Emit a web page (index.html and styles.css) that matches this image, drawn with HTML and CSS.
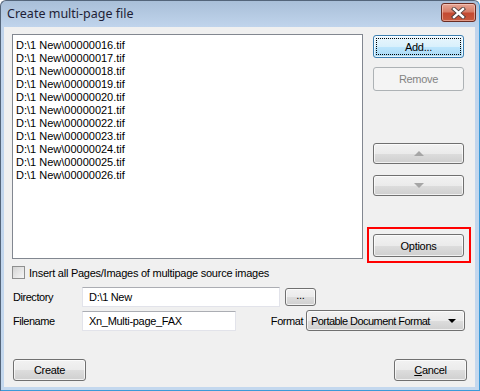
FILE: index.html
```html
<!DOCTYPE html>
<html lang="en">
<head>
    <meta charset="UTF-8">
    <title>Create multi-page file</title>
    <link rel="stylesheet" href="styles.css">
</head>
<body>
    <div class="window">
        <!-- Title bar -->
        <div class="titlebar">
            <span class="title">Create multi-page file</span>
            <button class="close-btn" aria-label="Close">
                <svg width="15" height="12" viewBox="0 0 15 12">
                    <path d="M3 2 L12 10 M12 2 L3 10" stroke="#4a3a38" stroke-width="4.2" stroke-linecap="square"/>
                    <path d="M3 2 L12 10 M12 2 L3 10" stroke="#ffffff" stroke-width="2.4" stroke-linecap="square"/>
                </svg>
            </button>
        </div>

        <!-- Client area -->
        <div class="client">
            <div class="top">
                <ul class="file-list">
                    <li>D:\1 New\00000016.tif</li>
                    <li>D:\1 New\00000017.tif</li>
                    <li>D:\1 New\00000018.tif</li>
                    <li>D:\1 New\00000019.tif</li>
                    <li>D:\1 New\00000020.tif</li>
                    <li>D:\1 New\00000021.tif</li>
                    <li>D:\1 New\00000022.tif</li>
                    <li>D:\1 New\00000023.tif</li>
                    <li>D:\1 New\00000024.tif</li>
                    <li>D:\1 New\00000025.tif</li>
                    <li>D:\1 New\00000026.tif</li>
                </ul>
                <div class="side">
                    <button class="btn btn-default btn-add">Add...</button>
                    <button class="btn btn-disabled btn-remove">Remove</button>
                    <button class="btn btn-arrow btn-up"><span class="tri-up"></span></button>
                    <button class="btn btn-arrow btn-down"><span class="tri-down"></span></button>
                    <div class="highlight">
                        <button class="btn btn-options">Options</button>
                    </div>
                </div>
            </div>

            <label class="check-row">
                <span class="checkbox"></span>
                <span class="check-text">Insert all Pages/Images of multipage source images</span>
            </label>

            <div class="row row-dir">
                <span class="label">Directory</span>
                <div class="textbox textbox-dir">D:\1 New</div>
                <button class="btn btn-browse">...</button>
            </div>

            <div class="row row-file">
                <span class="label">Filename</span>
                <div class="textbox textbox-file">Xn_Multi-page_FAX</div>
                <span class="format-label">Format</span>
                <div class="combo">
                    <span>Portable Document Format</span>
                    <span class="tri-combo"></span>
                </div>
            </div>

            <div class="bottom">
                <button class="btn btn-create">Create</button>
                <button class="btn btn-cancel"><u>C</u>ancel</button>
            </div>
        </div>
    </div>
</body>
</html>
```

FILE: styles.css
```css
/* Reset */
* {
    margin: 0;
    padding: 0;
    box-sizing: border-box;
}

body {
    font-family: "Liberation Sans", Arial, sans-serif;
    font-size: 11px;
    color: #000;
    background: #ffffff;
    width: 480px;
    height: 391px;
    overflow: hidden;
}

/* Window frame */
.window {
    width: 480px;
    height: 391px;
    display: flex;
    flex-direction: column;
    padding: 0 4px 3px 3px;
    background: linear-gradient(to bottom, #a9bfd8 0, #c0d4ec 26px, #c4d8ee 100%);
    border: 1px solid #54657a;
    border-right-color: #3b9ad8;
    border-bottom-color: #3b9ad8;
    border-radius: 6px 6px 0 0;
}

.titlebar {
    height: 26px;
    display: flex;
    align-items: center;
    justify-content: space-between;
    padding: 0 0 0 3px;
}

.title {
    font-family: "Noto Sans", sans-serif;
    font-size: 12.5px;
    color: #1e1e36;
    margin-top: -2px;
}

.close-btn {
    width: 35px;
    height: 19px;
    margin-top: -3px;
    margin-right: -1px;
    border: 1px solid #6b2c22;
    border-radius: 3px;
    background: linear-gradient(to bottom, #e6a696 0%, #d77e68 45%, #c44a32 55%, #c75a3e 100%);
    display: flex;
    align-items: center;
    justify-content: center;
    box-shadow: inset 0 0 0 1px rgba(255, 220, 210, 0.5);
}

.close-btn svg {
    display: block;
}

/* Client area */
.client {
    flex: 1;
    background: #f0f0f0;
    display: flex;
    flex-direction: column;
    padding: 0 8px 6px 8px;
}

.top {
    display: flex;
    margin-top: 7px;
    height: 225px;
}

.file-list {
    list-style: none;
    width: 351px;
    height: 225px;
    background: #fff;
    border: 1px solid #828790;
    padding: 4px 3px;
    line-height: 13px;
}

.side {
    width: 91px;
    margin-left: 10px;
    padding-top: 1px;
    display: flex;
    flex-direction: column;
}

/* Buttons */
.btn {
    position: relative;
    font-family: "Liberation Sans", Arial, sans-serif;
    font-size: 11px;
    letter-spacing: -0.3px;
    color: #000;
    height: 23px;
    border: 1px solid #707070;
    border-radius: 3px;
    background: linear-gradient(to bottom, #f2f2f2 0%, #ebebeb 50%, #dddddd 51%, #cfcfcf 100%);
    box-shadow: inset 0 0 0 1px rgba(255, 255, 255, 0.7);
    display: flex;
    align-items: center;
    justify-content: center;
}

.btn-default {
    border-color: #3c7fb1;
    background: linear-gradient(to bottom, #eaf6fd 0%, #d9f0fc 50%, #bee6fd 51%, #a7d9f5 100%);
}

.btn-default::after {
    content: "";
    position: absolute;
    inset: 2px;
    border: 1px dotted #000;
}

.btn-disabled {
    border-color: #adb2b5;
    background: #f4f4f4;
    color: #838383;
    box-shadow: none;
}

.btn-remove {
    margin-top: 9px;
    height: 24px;
}

.btn-arrow {
    height: 21px;
}

.btn-up {
    margin-top: 52px;
}

.btn-down {
    margin-top: 11px;
}

.tri-up {
    width: 0;
    height: 0;
    border-left: 5px solid transparent;
    border-right: 5px solid transparent;
    border-bottom: 5px solid #a6a6a6;
}

.tri-down {
    width: 0;
    height: 0;
    border-left: 5px solid transparent;
    border-right: 5px solid transparent;
    border-top: 5px solid #a6a6a6;
}

.highlight {
    position: relative;
    margin-top: 38px;
}

.highlight::before {
    content: "";
    position: absolute;
    top: -7px;
    left: -6px;
    right: -7px;
    bottom: -6px;
    border: 2px solid #ff0000;
}

.btn-options {
    width: 91px;
}

/* Check row */
.check-row {
    display: flex;
    align-items: center;
    height: 13px;
    margin-top: 7px;
    gap: 4px;
}

.check-text {
    letter-spacing: -0.25px;
}

.checkbox {
    width: 13px;
    height: 13px;
    border: 1px solid #8e8f8f;
    background: linear-gradient(135deg, #d4d4d4, #f6f6f6);
}

/* Form rows */
.row {
    display: flex;
    align-items: center;
}

.row-dir {
    margin-top: 8px;
    height: 20px;
}

.row-file {
    margin-top: 3px;
    height: 21px;
}

.label {
    width: 70px;
    padding-left: 1px;
    letter-spacing: -0.45px;
}

.textbox {
    height: 20px;
    background: #fff;
    border: 1px solid #e2e3ea;
    border-top-color: #abadb3;
    padding: 0 6px;
    display: flex;
    align-items: center;
    letter-spacing: -0.3px;
}

.textbox-dir {
    width: 198px;
}

.textbox-file {
    width: 154px;
}

.btn-browse {
    width: 31px;
    height: 18px;
    margin-left: 5px;
    padding-bottom: 4px;
}

.format-label {
    margin-left: auto;
    letter-spacing: -0.45px;
}

.combo {
    margin-left: 3px;
    margin-right: 2px;
    width: 159px;
    height: 21px;
    border: 1px solid #707070;
    border-radius: 3px;
    background: linear-gradient(to bottom, #f2f2f2 0%, #ebebeb 50%, #dddddd 51%, #cfcfcf 100%);
    box-shadow: inset 0 0 0 1px rgba(255, 255, 255, 0.7);
    display: flex;
    align-items: center;
    justify-content: space-between;
    padding: 0 8px 0 4px;
    letter-spacing: -0.55px;
}

.tri-combo {
    width: 0;
    height: 0;
    border-left: 4px solid transparent;
    border-right: 4px solid transparent;
    border-top: 4px solid #000;
}

/* Bottom buttons */
.bottom {
    margin-top: auto;
    display: flex;
    justify-content: space-between;
    padding-left: 1px;
}

.btn-create,
.btn-cancel {
    width: 73px;
    height: 22px;
}
```
